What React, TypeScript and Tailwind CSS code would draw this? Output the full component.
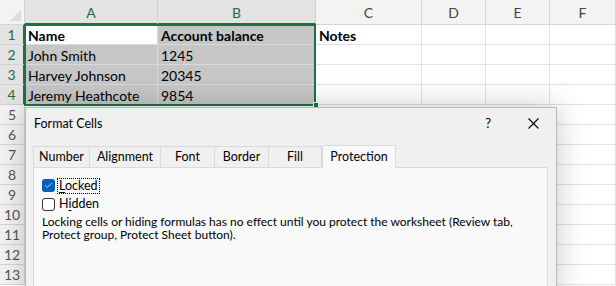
import { Check } from "lucide-react";

const cols = ["A", "B", "C", "D", "E", "F"];
const rows = [
  ["Name", "Account balance", "Notes"],
  ["John Smith", "1245", ""],
  ["Harvey Johnson", "20345", ""],
  ["Jeremy Heathcote", "9854", ""],
];

const tabs = ["Number", "Alignment", "Font", "Border", "Fill"];

function Sheet() {
  const allRows = Array.from({ length: 13 }, (_, i) => i + 1);
  return (
    <div className="grid grid-cols-[25px_133px_158px_106px_64px_64px_1fr] grid-rows-[25px_repeat(13,20px)] bg-white">
      {/* corner */}
      <div className="relative border-r border-b border-[#d4d4d4] bg-[#f3f3f3]">
        <svg className="absolute right-[3px] bottom-[3px]" width="11" height="11" viewBox="0 0 11 11">
          <path d="M11 0 L11 11 L0 11 Z" fill="#dcdcdc" />
        </svg>
      </div>
      {cols.map((c, i) => (
        <div
          key={c}
          className={
            i < 2
              ? "flex items-center justify-center border-r border-b-2 border-r-[#d0d0d0] border-b-[#1e7145] bg-[#e3e3e3] pt-[2px] text-[14px] text-[#1e6b41]"
              : "flex items-center justify-center border-r border-b border-[#d6d6d6] bg-[#f3f3f3] text-[14px] text-[#444]"
          }
        >
          {c}
        </div>
      ))}
      {allRows.map((r) => {
        const data = rows[r - 1];
        const sel = r <= 4;
        return [
          <div
            key={`h${r}`}
            className={
              sel
                ? "flex items-center justify-center border-r-2 border-b border-r-[#1e7145] border-b-[#d0d0d0] bg-[#e3e3e3] text-[14px] text-[#1e6b41]"
                : "flex items-center justify-center border-r border-b border-[#d6d6d6] bg-[#f3f3f3] text-[14px] text-[#555]"
            }
          >
            {r}
          </div>,
          ...cols.map((c, ci) => {
            const val = data && ci < 3 ? data[ci] : "";
            const inSel = sel && ci < 2;
            const active = r === 1 && ci === 0;
            const bg = active ? "bg-white" : inSel ? "bg-[#c6c6c6]" : "bg-white";
            const line = inSel ? "border-[#dadada]" : "border-[#e1e1e1]";
            return (
              <div
                key={`${c}${r}`}
                className={`flex items-center overflow-hidden whitespace-nowrap border-r border-b px-[3px] pt-[2px] text-[14px] leading-none text-black ${bg} ${line} ${r === 1 ? "font-bold" : ""}`}
              >
                {val}
              </div>
            );
          }),
        ];
      })}
    </div>
  );
}

function Dialog() {
  return (
    <div className="absolute left-[25px] top-[107px] h-[190px] w-[532px] border border-[#b9b9b9] bg-[#f0f0f0] shadow-[0_0_28px_rgba(0,0,0,0.22)] font-['Lato',sans-serif] text-[12px] text-black">
      <div className="flex h-[31px] items-center pl-[8px]">
        <span className="flex-1 pt-[1px] text-[12.5px]">Format Cells</span>
        <span className="mr-[37px] text-[13px]">?</span>
        <svg className="mr-[17px]" width="11" height="11" viewBox="0 0 11 11">
          <path d="M0.5 0.5 L10.5 10.5 M10.5 0.5 L0.5 10.5" stroke="#000" strokeWidth="1.1" />
        </svg>
      </div>
      <div className="ml-[7px] mr-[8px] mt-[7px]">
        <div className="flex h-[21px] items-end">
          {tabs.map((t, i) => (
            <div
              key={t}
              className={`flex h-[21px] items-center justify-center border-t border-r border-[#dadada] bg-[#f0f0f0] text-[12.5px] ${i === 0 ? "border-l" : ""} ${
                ["w-[57px]", "w-[71px]", "w-[54px]", "w-[54px]", "w-[53px]"][i]
              }`}
            >
              {t}
            </div>
          ))}
          <div className="relative z-10 -mb-px flex h-[23px] w-[74px] items-center justify-center border-t border-r border-l border-[#dadada] bg-[#f9f9f9] text-[12.5px]">
            Protection
          </div>
        </div>
        <div className="h-[150px] border border-[#dadada] bg-[#f9f9f9] px-[8px] pt-[9px]">
          <div className="flex h-[17px] items-center gap-[2px]">
            <div className="flex h-[13px] w-[13px] items-center justify-center rounded-[3px] bg-[#005fb8]">
              <Check className="h-[9px] w-[9px] text-white" strokeWidth={2} />
            </div>
            <span className="border border-dotted border-black px-[1px] text-[12.5px] leading-[14px]">
              <span className="underline underline-offset-2">L</span>ocked
            </span>
          </div>
          <div className="mt-[2px] flex h-[17px] items-center gap-[3px]">
            <div className="h-[13px] w-[13px] rounded-[3px] border border-[#333] bg-white" />
            <span className="px-[1px] text-[12.5px]">
              H<span className="underline underline-offset-2">i</span>dden
            </span>
          </div>
          <p className="mt-[2px] w-[490px] text-[12px] leading-[13px]">
            Locking cells or hiding formulas has no effect until you protect the worksheet (Review tab, Protect group, Protect Sheet button).
          </p>
        </div>
      </div>
    </div>
  );
}

export default function App() {
  return (
    <div className="relative h-[286px] w-[616px] overflow-hidden bg-white font-['Lato',sans-serif]">
      <Sheet />
      {/* selection outline */}
      <div className="pointer-events-none absolute left-[24px] top-[24px] h-[82px] w-[292px] border-2 border-[#1e7145]" />
      <div className="pointer-events-none absolute left-[313px] top-[102px] h-[6px] w-[6px] border border-white bg-[#1e7145]" />
      <Dialog />
    </div>
  );
}
